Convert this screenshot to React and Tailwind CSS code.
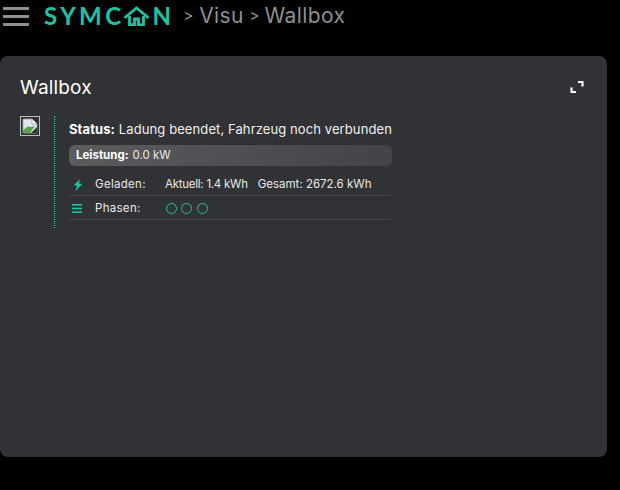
import React from "react";

const font = { fontFamily: '"Inter", "Open Sans", sans-serif' };

const HouseO = () => (
    <svg width="25" height="20" viewBox="0 0 25 20" fill="none" stroke="#14c6a6" strokeWidth="2.8">
        <path d="M1.5 11 L12.5 2 L23.5 11" strokeLinecap="square" />
        <path d="M5.5 10 V18.6 H10.5 V13 H14.5 V18.6 H19.5 V10" />
    </svg>
);

const BrokenImage = () => (
    <div className="w-5 h-5 border border-[#bdbdbd] flex items-center justify-center">
        <svg width="16" height="16" viewBox="0 0 16 16">
            <path d="M1 1 H10 L15 6 V15 H1 Z" fill="#dfe6ee" stroke="#9a9ea3" strokeWidth="0.8" />
            <path d="M1 13 Q5 7 9 9 L13 8 L8 15 H1 Z" fill="#57a845" />
            <path d="M10 1 V6 H15" fill="#fff" stroke="#9a9ea3" strokeWidth="0.8" />
            <path d="M9 15 L15 9 V15 Z" fill="#303236" />
        </svg>
    </div>
);

const Bolt = () => (
    <svg width="10" height="12" viewBox="0 0 10 12" fill="#14c6a6" className="ml-[1px]">
        <path d="M7 0 L0.5 6.5 H4 L2.5 12 L9.5 4.8 H5.8 Z" />
    </svg>
);

const Lines = () => (
    <svg width="10" height="9" viewBox="0 0 10 9" fill="#14c6a6">
        <rect y="0" width="10" height="1.6" />
        <rect y="3.7" width="10" height="1.6" />
        <rect y="7.4" width="10" height="1.6" />
    </svg>
);

const Row = ({ icon, label, children }) => (
    <div className="h-6 pt-[2px] flex items-center border-b border-[#45474b] text-[11.5px] text-[#e8e8e8]">
        <div className="w-[26px] pl-[3px] flex justify-start">{icon}</div>
        <div className="w-[70px] tracking-[0.3px]">{label}</div>
        <div className="flex items-center">{children}</div>
    </div>
);

const App = () => {
    return (
        <div className="h-screen w-full bg-black overflow-hidden" style={font}>
            <div className="h-14 flex items-start pt-[3px]">
                <div className="w-[26px] ml-[3px] mt-[4px] flex flex-col gap-[5px]">
                    <div className="h-[3px] bg-[#8f8f8f]"></div>
                    <div className="h-[3px] bg-[#8f8f8f]"></div>
                    <div className="h-[3px] bg-[#8f8f8f]"></div>
                </div>
                <div className="ml-[15px] mt-[1px] flex items-center h-6 text-[#14c6a6] text-[24px] font-bold leading-none tracking-[3.4px]" style={{ fontFamily: '"Lato", sans-serif' }}>
                    <span>SYMC</span>
                    <HouseO />
                    <span className="ml-[3px]">N</span>
                </div>
                <div className="ml-[9px] h-6 flex items-center text-[#8f8f8f] text-[21px] leading-none">
                    <span className="text-[15px] mr-[6px]">&gt;</span>
                    <span className="tracking-[0.3px]">Visu</span>
                    <span className="text-[15px] ml-[6px] mr-[5px]">&gt;</span>
                    <span className="tracking-[0.4px]">Wallbox</span>
                </div>
            </div>
            <div className="mr-[13px] h-[401px] bg-[#303236] rounded-lg px-5 pt-[20px]">
                <div className="flex items-center justify-between h-[22px] pr-[3px]">
                    <span className="text-white text-[19px] leading-none tracking-[0.15px]">Wallbox</span>
                    <svg width="14" height="14" viewBox="0 0 14 14" fill="none" stroke="#fff" strokeWidth="2.2">
                        <path d="M8 2 H12.5 V6.5" />
                        <path d="M1.5 7.5 V12 H6" />
                    </svg>
                </div>
                <div className="flex mt-[18px]">
                    <BrokenImage />
                    <div className="ml-[14px] h-[112px] border-l border-dotted border-[#14c6a6] pl-[14px] w-[338px]">
                        <div className="h-[29px] pt-[5px] text-[13px] leading-[17px] text-[#f0f0f0] whitespace-nowrap tracking-[0.1px]">
                            <b className="text-white">Status:</b> Ladung beendet, Fahrzeug noch verbunden
                        </div>
                        <div className="h-[21px] rounded-md bg-gradient-to-r from-[#5c5c5f] to-[#434448] flex items-center px-[7px] text-[11.5px] text-[#e8e8e8]">
                            <b className="text-white mr-1">Leistung:</b> 0.0 kW
                        </div>
                        <div className="mt-[6px] mr-[2px]">
                            <Row icon={<Bolt />} label="Geladen:">
                                <span className="tracking-[-0.25px]">Aktuell: 1.4 kWh</span>
                                <span className="ml-[10px]">Gesamt: 2672.6 kWh</span>
                            </Row>
                            <Row icon={<Lines />} label="Phasen:">
                                <div className="flex gap-[5px] ml-[1px]">
                                    <div className="w-[11px] h-[11px] rounded-full border border-[#14c6a6]"></div>
                                    <div className="w-[11px] h-[11px] rounded-full border border-[#14c6a6] -ml-[1px]"></div>
                                    <div className="w-[11px] h-[11px] rounded-full border border-[#14c6a6]"></div>
                                </div>
                            </Row>
                        </div>
                    </div>
                </div>
            </div>
        </div>
    );
};

export default App;
